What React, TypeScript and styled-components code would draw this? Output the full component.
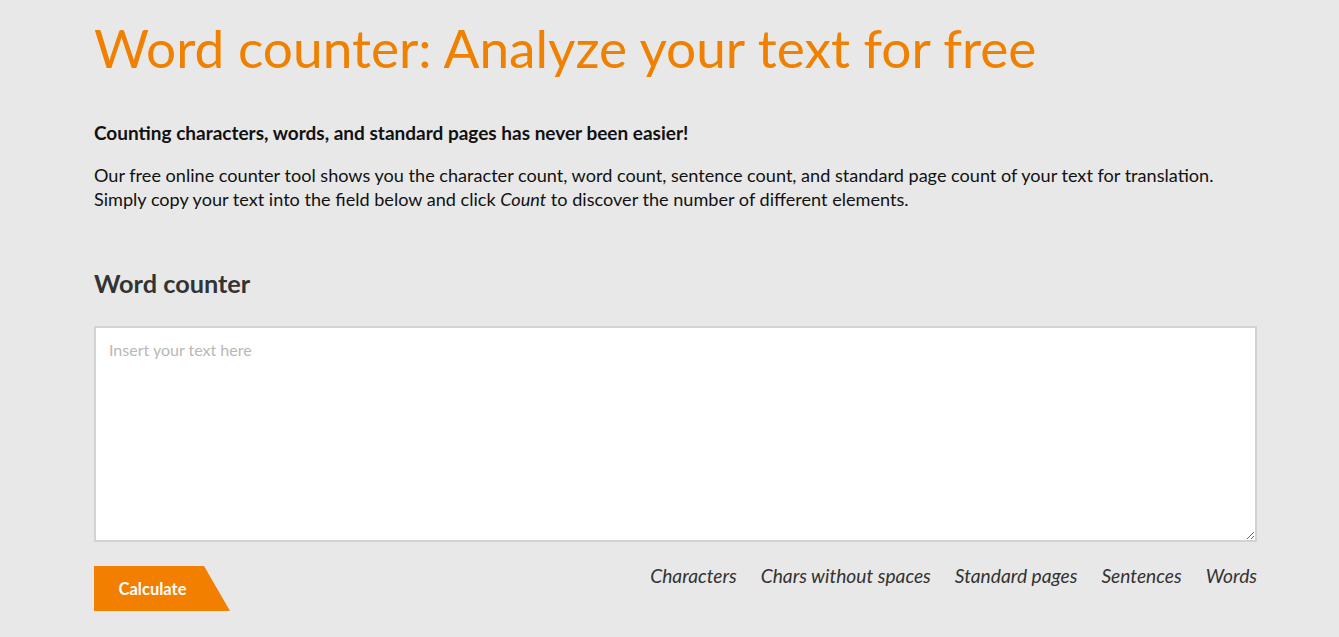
import React from "react";
import styled, { createGlobalStyle } from "styled-components";

const GlobalStyle = createGlobalStyle`
  html, body {
    margin: 0;
    padding: 0;
    background: #e8e8e8;
    font-family: Lato, "Liberation Sans", sans-serif;
    color: #111;
  }
`;

const Page = styled.div`
  width: 1163px;
  padding: 14px 0 0 94px;
`;

const Title = styled.h1`
  margin: 0;
  font-size: 53.2px;
  font-weight: 400;
  line-height: 66px;
  color: #f08000;
`;

const Lead = styled.p`
  margin: 41px 0 0;
  font-size: 19px;
  font-weight: 700;
  line-height: 24px;
`;

const Intro = styled.p`
  margin: 18px 0 0;
  font-size: 18.1px;
  line-height: 24px;
`;

const SectionTitle = styled.h2`
  margin: 56px 0 0;
  font-size: 25.3px;
  font-weight: 700;
  line-height: 32px;
  color: #333;
`;

const TextArea = styled.textarea`
  display: block;
  box-sizing: border-box;
  width: 1163px;
  height: 216px;
  margin-top: 27px;
  padding: 12px 13px;
  border: 2px solid #d2d2d2;
  background: #fff;
  font-family: inherit;
  font-size: 16px;
  color: #333;
  resize: both;
  outline: none;

  &::placeholder {
    color: #b8b8b8;
  }
`;

const Footer = styled.div`
  display: flex;
  justify-content: space-between;
  align-items: flex-start;
  margin-top: 24px;
`;

const CalcButton = styled.button`
  width: 136px;
  height: 45px;
  padding: 0 19px 0 0;
  border: 0;
  background: #f27f00;
  clip-path: polygon(0 0, 80.9% 0, 100% 100%, 0 100%);
  color: #fff;
  font-family: inherit;
  font-size: 16.5px;
  font-weight: 700;
  cursor: pointer;
`;

const Stats = styled.ul`
  display: flex;
  gap: 24px;
  margin: 0;
  padding: 0;
  list-style: none;
`;

const Stat = styled.li`
  font-size: 19.2px;
  font-style: italic;
  line-height: 20px;
  color: #333;
`;

const stats = ["Characters", "Chars without spaces", "Standard pages", "Sentences", "Words"];

export default function App() {
  return (
    <>
      <GlobalStyle />
      <Page>
        <Title>Word counter: Analyze your text for free</Title>
        <Lead>Counting characters, words, and standard pages has never been easier!</Lead>
        <Intro>
          Our free online counter tool shows you the character count, word count, sentence count, and standard page
          count of your text for translation.
          <br />
          Simply copy your text into the field below and click <em>Count</em> to discover the number of different
          elements.
        </Intro>
        <SectionTitle>Word counter</SectionTitle>
        <TextArea placeholder="Insert your text here" />
        <Footer>
          <CalcButton>Calculate</CalcButton>
          <Stats>
            {stats.map((s) => (
              <Stat key={s}>{s}</Stat>
            ))}
          </Stats>
        </Footer>
      </Page>
    </>
  );
}
